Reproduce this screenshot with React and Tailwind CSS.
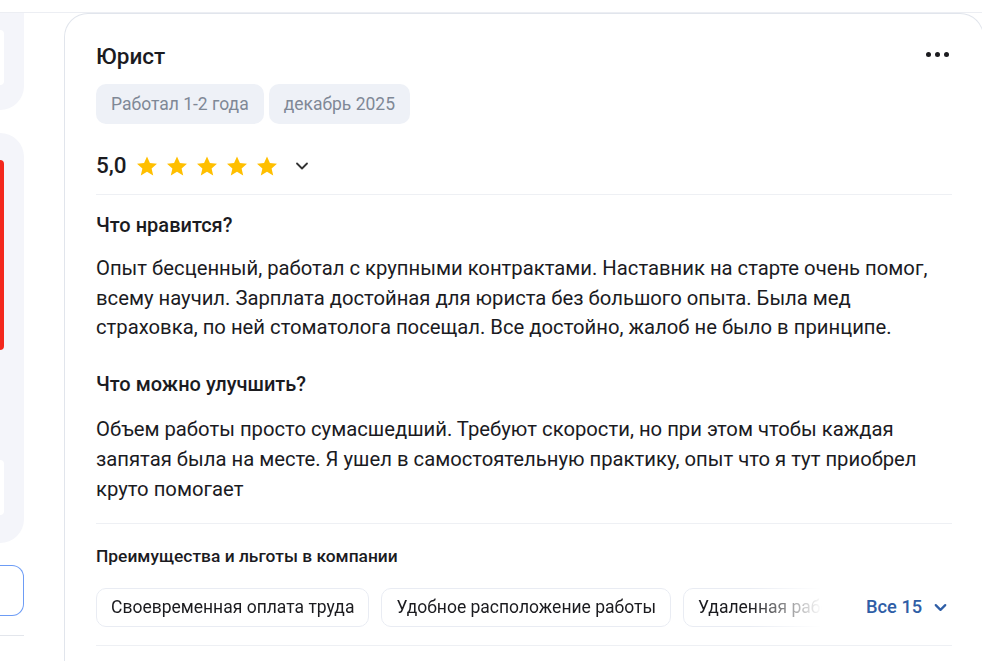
import { ChevronDown } from "lucide-react";

const Star = () => (
  <svg width="24" height="24" viewBox="0 0 24 24" className="shrink-0">
    <path
      d="M12 2.5l2.9 6.6 7.1.6-5.4 4.7 1.6 7-6.2-3.7-6.2 3.7 1.6-7L2 9.7l7.1-.6z"
      fill="#ffbf00"
    />
  </svg>
);

const benefits = [
  "Своевременная оплата труда",
  "Удобное расположение работы",
  "Удаленная работа",
];

export default function App() {
  return (
    <div
      className="w-[982px] h-[661px] overflow-hidden bg-white relative"
      style={{ fontFamily: "Roboto, 'Noto Sans', sans-serif" }}
    >
      <div className="h-[13px] border-b border-[#eceef3]" />
      <div className="flex gap-[40px]">
        {/* left column, mostly off-screen */}
        <div className="w-[24px] shrink-0 flex flex-col">
          <div className="h-[97px] bg-[#f4f5fa] rounded-br-[24px] pt-[17px]">
            <div className="w-[4px] h-[55px] bg-white rounded-r-[6px]" />
          </div>
          <div className="mt-[23px] h-[410px] bg-[#f4f5fa] rounded-r-[24px] pt-[27px]">
            <div className="w-[4px] h-[190px] bg-[#f3271c] rounded-r-[6px]" />
            <div className="mt-[110px] w-[4px] h-[55px] bg-white rounded-r-[6px]" />
          </div>
          <div className="mt-[22px] h-[51px] border border-l-0 border-[#6d9cf5] rounded-r-[12px]" />
          <div className="mt-[19px] h-px bg-[#e3e6ec]" />
        </div>

        {/* review card */}
        <div className="w-[920px] shrink-0 border border-[#e1e5ec] rounded-t-[24px] border-b-0 px-[31px] pt-[27px] h-[700px] text-[#1b1b1f]">
          <div className="flex items-start justify-between">
            <h2 className="text-[22.5px] font-medium leading-[30px]">Юрист</h2>
            <div className="flex gap-[4px] pt-[11px] pr-[3px]">
              <span className="w-[5px] h-[5px] rounded-full bg-[#1b1b1f]" />
              <span className="w-[5px] h-[5px] rounded-full bg-[#1b1b1f]" />
              <span className="w-[5px] h-[5px] rounded-full bg-[#1b1b1f]" />
            </div>
          </div>

          <div className="flex gap-[5px] mt-[13px]">
            <span className="h-[40px] px-[15px] flex items-center rounded-[10px] bg-[#eef1f7] text-[17.5px] text-[#7f8896]">
              Работал 1-2 года
            </span>
            <span className="h-[40px] px-[15px] flex items-center rounded-[10px] bg-[#eef1f7] text-[17.5px] text-[#7f8896]">
              декабрь 2025
            </span>
          </div>

          <div className="flex items-center mt-[27px] h-[30px]">
            <span className="text-[22.5px] font-medium mr-[8px]">5,0</span>
            <div className="flex gap-[6px]">
              <Star />
              <Star />
              <Star />
              <Star />
              <Star />
            </div>
            <ChevronDown className="ml-[13px] text-[#333]" size={20} strokeWidth={2.2} />
          </div>
          <div className="mt-[13px] h-px bg-[#eef0f4]" />

          <h3 className="mt-[17px] text-[20px] font-medium leading-[26px]">Что нравится?</h3>
          <p className="mt-[16px] text-[20.25px] leading-[29.5px] whitespace-nowrap">
            Опыт бесценный, работал с крупными контрактами. Наставник на старте очень помог,
            <br />
            всему научил. Зарплата достойная для юриста без большого опыта. Была мед
            <br />
            страховка, по ней стоматолога посещал. Все достойно, жалоб не было в принципе.
          </p>

          <h3 className="mt-[28px] text-[20px] font-medium leading-[26px]">Что можно улучшить?</h3>
          <p className="mt-[17px] text-[20.25px] leading-[30px] whitespace-nowrap">
            Объем работы просто сумасшедший. Требуют скорости, но при этом чтобы каждая
            <br />
            запятая была на месте. Я ушел в самостоятельную практику, опыт что я тут приобрел
            <br />
            круто помогает
          </p>

          <div className="mt-[19px] h-px bg-[#eef0f4]" />

          <h4 className="mt-[21px] text-[17.4px] font-medium leading-[22px]">
            Преимущества и льготы в компании
          </h4>

          <div className="mt-[21px] flex items-center">
            <div
              className="w-[726px] flex gap-[12px] overflow-hidden"
              style={{
                maskImage: "linear-gradient(to right, black 90%, transparent 100%)",
                WebkitMaskImage: "linear-gradient(to right, black 90%, transparent 100%)",
              }}
            >
              {benefits.map((b) => (
                <span
                  key={b}
                  className="h-[39px] px-[14px] flex items-center shrink-0 rounded-[10px] border border-[#e9ecf3] text-[17.5px] whitespace-nowrap"
                >
                  {b}
                </span>
              ))}
            </div>
            <button className="ml-[44px] flex items-center gap-[9px] text-[18.3px] font-medium text-[#2f5ea6]">
              Все 15
              <ChevronDown size={19} strokeWidth={2.8} />
            </button>
          </div>

          <div className="mt-[18px] h-px bg-[#eef0f4]" />
        </div>
      </div>
    </div>
  );
}
